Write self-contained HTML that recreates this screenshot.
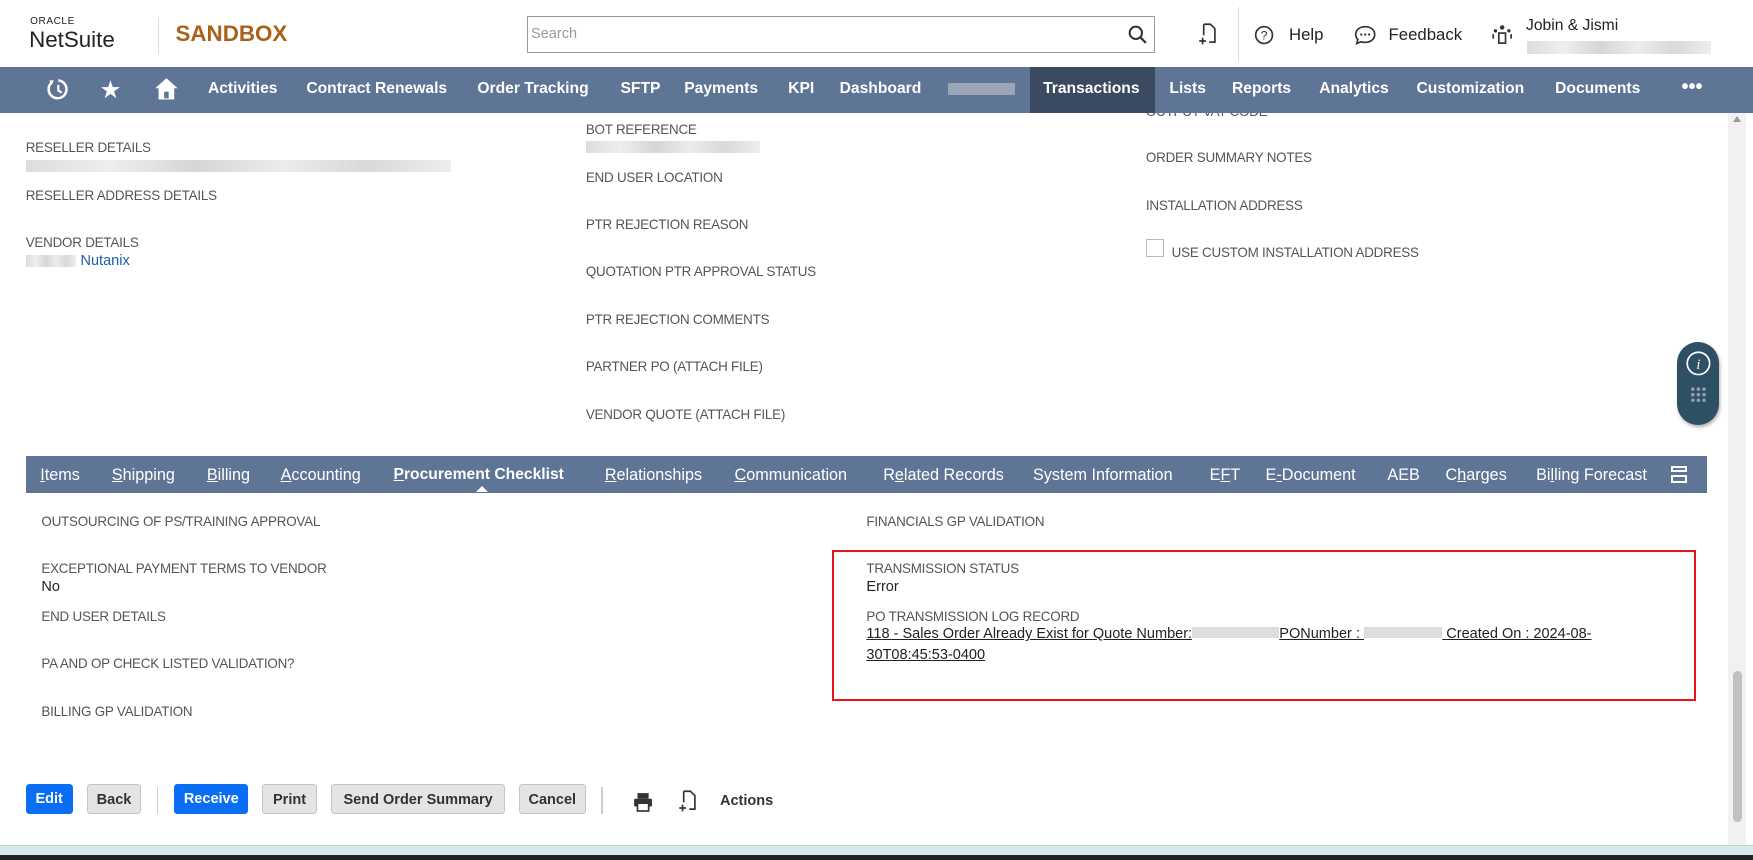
<!DOCTYPE html>
<html><head><meta charset="utf-8"><style>
html{zoom:1.11798}
body{margin:0;width:1568px;height:769px;overflow:hidden;background:#fff;font-family:"Liberation Sans",sans-serif;position:relative}
.a{position:absolute;white-space:nowrap}
.lbl{font-size:12px;color:#555;letter-spacing:-0.2px}
.val{font-size:13px;color:#222}
.nav{font-size:14px;font-weight:bold;color:#fff;top:72px}
.tab{font-size:14.5px;color:#fff;top:417px}
.tab u{text-decoration:underline}
.blur{background:linear-gradient(90deg,#ddd,#eee,#d6d6d6,#ececec,#d9d9d9,#eee);height:11px}
.btn{top:701px;height:27px;line-height:27px;font-size:13px;font-weight:bold;text-align:center;border-radius:3px;box-sizing:border-box}
.g{background:#e4e4e4;border:1px solid #c4c4c4;color:#333}
.b{background:#0a6ef5;color:#fff}
</style></head><body>
<div class="a lbl" style="left:1025px;top:93px">OUTPUT VAT CODE</div>
<!-- header -->
<div class="a" style="left:0;top:0;width:1568px;height:60px;background:#fff"></div>
<div class="a" style="left:27px;top:14px;font-size:9px;letter-spacing:0.5px;color:#222">ORACLE</div>
<div class="a" style="left:26px;top:24px;font-size:20px;color:#222">NetSuite</div>
<div class="a" style="left:141px;top:15px;width:1px;height:33px;background:#ddd"></div>
<div class="a" style="left:157px;top:19px;font-size:20px;font-weight:bold;color:#a9611c">SANDBOX</div>
<div class="a" style="left:471px;top:14px;width:560px;height:32px;border:1px solid #999"></div>
<div class="a" style="left:475px;top:23px;font-size:13px;color:#999">Search</div>
<svg class="a" style="left:1009px;top:22px" width="18" height="18"><circle cx="7" cy="7" r="5.5" fill="none" stroke="#333" stroke-width="1.8"/><path d="M11 11L16 16" stroke="#333" stroke-width="2"/></svg>
<svg class="a" style="left:1071px;top:20px" width="20" height="22"><path d="M6 2H12L16 6V18H11M6 2V12" fill="none" stroke="#333" stroke-width="1.5"/><path d="M5 14V20M2 17H8" stroke="#333" stroke-width="1.5"/></svg>
<div class="a" style="left:1107px;top:6px;width:1px;height:49px;background:#ddd"></div>
<svg class="a" style="left:1122px;top:22px" width="18" height="18"><circle cx="9" cy="9" r="7.5" fill="none" stroke="#333" stroke-width="1.5"/><text x="9" y="13" font-size="11" text-anchor="middle" font-family="Liberation Sans" fill="#333">?</text></svg>
<div class="a" style="left:1153px;top:22px;font-size:15px;color:#222">Help</div>
<svg class="a" style="left:1211px;top:22px" width="20" height="18"><path d="M10 1.5C5 1.5 1.5 4.5 1.5 8.5C1.5 10.5 2.5 12 3.5 13L2.5 16.5L6.5 15C7.5 15.3 8.7 15.5 10 15.5C15 15.5 18.5 12.5 18.5 8.5C18.5 4.5 15 1.5 10 1.5Z" fill="none" stroke="#333" stroke-width="1.5"/><circle cx="6.5" cy="8.5" r="1" fill="#333"/><circle cx="10" cy="8.5" r="1" fill="#333"/><circle cx="13.5" cy="8.5" r="1" fill="#333"/></svg>
<div class="a" style="left:1242px;top:22px;font-size:15px;color:#222">Feedback</div>
<svg class="a" style="left:1334px;top:21px" width="20" height="20"><circle cx="10" cy="4" r="2" fill="#333"/><circle cx="4" cy="7" r="1.5" fill="#333"/><circle cx="16" cy="7" r="1.5" fill="#333"/><rect x="7" y="9" width="6" height="9" fill="none" stroke="#333" stroke-width="1.5"/><path d="M2 10V14M18 10V14" stroke="#333" stroke-width="1.5"/></svg>
<div class="a" style="left:1365px;top:15px;font-size:14px;color:#222">Jobin &amp; Jismi</div>
<div class="a blur" style="left:1366px;top:37px;width:164px"></div>
<!-- nav -->
<div class="a" style="left:0;top:60px;width:1568px;height:41px;background:#5f7596"></div>
<div class="a" style="left:921px;top:60px;width:112px;height:41px;background:#3a4a60"></div>
<svg class="a" style="left:41px;top:69px" width="22" height="22"><path d="M5 5A8 8 0 1 0 11 3" fill="none" stroke="#fff" stroke-width="2.2"/><path d="M3 3L7 3L5 7" fill="#fff"/><path d="M11 7V12L14 14" fill="none" stroke="#fff" stroke-width="2"/></svg>
<div class="a" style="left:89px;top:67px;font-size:22px;color:#fff">★</div>
<svg class="a" style="left:137px;top:68px" width="24" height="22"><path d="M12 2L2 11H5V21H19V11H22Z" fill="#fff"/><rect x="10" y="14" width="4" height="6" fill="#5f7596"/></svg>
<div class="a nav" style="left:186px">Activities</div>
<div class="a nav" style="left:274px">Contract Renewals</div>
<div class="a nav" style="left:427px">Order Tracking</div>
<div class="a nav" style="left:555px">SFTP</div>
<div class="a nav" style="left:612px">Payments</div>
<div class="a nav" style="left:705px">KPI</div>
<div class="a nav" style="left:751px">Dashboard</div>
<div class="a" style="left:848px;top:74px;width:60px;height:11px;background:#9aa6b8"></div>
<div class="a nav" style="left:933px">Transactions</div>
<div class="a nav" style="left:1046px">Lists</div>
<div class="a nav" style="left:1102px">Reports</div>
<div class="a nav" style="left:1180px">Analytics</div>
<div class="a nav" style="left:1267px">Customization</div>
<div class="a nav" style="left:1391px">Documents</div>
<div class="a nav" style="left:1504px;top:68px;font-size:18px">•••</div>
<!-- body fields -->
<div class="a lbl" style="left:23px;top:125px">RESELLER DETAILS</div>
<div class="a blur" style="left:23px;top:143px;width:380px"></div>
<div class="a lbl" style="left:23px;top:168px">RESELLER ADDRESS DETAILS</div>
<div class="a lbl" style="left:23px;top:210px">VENDOR DETAILS</div>
<div class="a blur" style="left:23px;top:228px;width:45px"></div>
<div class="a" style="left:72px;top:226px;font-size:13px;color:#1a5eaa">Nutanix</div>
<div class="a lbl" style="left:524px;top:109px">BOT REFERENCE</div>
<div class="a blur" style="left:524px;top:126px;width:156px"></div>
<div class="a lbl" style="left:524px;top:152px">END USER LOCATION</div>
<div class="a lbl" style="left:524px;top:194px">PTR REJECTION REASON</div>
<div class="a lbl" style="left:524px;top:236px">QUOTATION PTR APPROVAL STATUS</div>
<div class="a lbl" style="left:524px;top:279px">PTR REJECTION COMMENTS</div>
<div class="a lbl" style="left:524px;top:321px">PARTNER PO (ATTACH FILE)</div>
<div class="a lbl" style="left:524px;top:364px">VENDOR QUOTE (ATTACH FILE)</div>
<div class="a lbl" style="left:1025px;top:134px">ORDER SUMMARY NOTES</div>
<div class="a lbl" style="left:1025px;top:177px">INSTALLATION ADDRESS</div>
<div class="a" style="left:1025px;top:214px;width:16px;height:16px;border:1px solid #bbb;box-sizing:border-box"></div>
<div class="a lbl" style="left:1048px;top:219px">USE CUSTOM INSTALLATION ADDRESS</div>
<!-- widget -->
<div class="a" style="left:1500px;top:306px;width:38px;height:74px;border-radius:19px;background:#2e5064;box-shadow:1px 2px 3px rgba(0,0,0,.3)"></div>
<svg class="a" style="left:1507px;top:313px" width="24" height="62"><circle cx="12" cy="12" r="10" fill="none" stroke="#fff" stroke-width="1.5"/><text x="12" y="17" font-size="13" font-style="italic" font-family="Liberation Serif" text-anchor="middle" fill="#fff">i</text><g fill="#8fa0ab"><circle cx="7" cy="35" r="1.6"/><circle cx="12" cy="35" r="1.6"/><circle cx="17" cy="35" r="1.6"/><circle cx="7" cy="40" r="1.6"/><circle cx="12" cy="40" r="1.6"/><circle cx="17" cy="40" r="1.6"/><circle cx="7" cy="45" r="1.6"/><circle cx="12" cy="45" r="1.6"/><circle cx="17" cy="45" r="1.6"/></g></svg>
<!-- subtabs -->
<div class="a" style="left:23px;top:408px;width:1504px;height:33px;background:#5f7596"></div>
<div class="a tab" style="left:36px"><u>I</u>tems</div>
<div class="a tab" style="left:100px"><u>S</u>hipping</div>
<div class="a tab" style="left:185px"><u>B</u>illing</div>
<div class="a tab" style="left:251px"><u>A</u>ccounting</div>
<div class="a tab" style="left:352px;font-weight:bold;font-size:14px"><u>P</u>rocurement Checklist</div>
<div class="a" style="left:426px;top:435px;width:0;height:0;border-left:6px solid transparent;border-right:6px solid transparent;border-bottom:6px solid #fff"></div>
<div class="a tab" style="left:541px"><u>R</u>elationships</div>
<div class="a tab" style="left:657px"><u>C</u>ommunication</div>
<div class="a tab" style="left:790px">R<u>e</u>lated Records</div>
<div class="a tab" style="left:924px">System Information</div>
<div class="a tab" style="left:1082px">E<u>F</u>T</div>
<div class="a tab" style="left:1132px">E<u>-</u>Document</div>
<div class="a tab" style="left:1241px">AEB</div>
<div class="a tab" style="left:1293px">C<u>h</u>arges</div>
<div class="a tab" style="left:1374px">Bi<u>l</u>ling Forecast</div>
<div class="a" style="left:1495px;top:417px;width:14px;height:5px;border:2px solid #fff;box-sizing:border-box"></div>
<div class="a" style="left:1495px;top:425px;width:14px;height:7px;border:2px solid #fff;box-sizing:border-box"></div>
<!-- subtab fields -->
<div class="a lbl" style="left:37px;top:460px">OUTSOURCING OF PS/TRAINING APPROVAL</div>
<div class="a lbl" style="left:37px;top:502px">EXCEPTIONAL PAYMENT TERMS TO VENDOR</div>
<div class="a val" style="left:37px;top:518px">No</div>
<div class="a lbl" style="left:37px;top:545px">END USER DETAILS</div>
<div class="a lbl" style="left:37px;top:587px">PA AND OP CHECK LISTED VALIDATION?</div>
<div class="a lbl" style="left:37px;top:630px">BILLING GP VALIDATION</div>
<div class="a lbl" style="left:775px;top:460px">FINANCIALS GP VALIDATION</div>
<div class="a lbl" style="left:775px;top:502px">TRANSMISSION STATUS</div>
<div class="a val" style="left:775px;top:518px">Error</div>
<div class="a lbl" style="left:775px;top:545px">PO TRANSMISSION LOG RECORD</div>
<div class="a val" style="left:775px;top:560px;text-decoration:underline">118 - Sales Order Already Exist for Quote Number:<span style="display:inline-block;width:78px;height:10px;background:#ddd"></span>PONumber : <span style="display:inline-block;width:70px;height:10px;background:#ddd"></span> Created On : 2024-08-</div>
<div class="a val" style="left:775px;top:579px;text-decoration:underline">30T08:45:53-0400</div>
<div class="a" style="left:744px;top:492px;width:773px;height:135px;border:2px solid #e8141b;box-sizing:border-box"></div>
<!-- buttons -->
<div class="a btn b" style="left:23px;width:42px">Edit</div>
<div class="a btn g" style="left:78px;width:48px">Back</div>
<div class="a" style="left:140px;top:704px;width:1px;height:24px;background:#ccc"></div>
<div class="a btn b" style="left:156px;width:66px">Receive</div>
<div class="a btn g" style="left:234px;width:50px">Print</div>
<div class="a btn g" style="left:296px;width:156px">Send Order Summary</div>
<div class="a btn g" style="left:464px;width:60px">Cancel</div>
<div class="a" style="left:538px;top:704px;width:1px;height:24px;background:#ccc"></div>
<svg class="a" style="left:566px;top:708px" width="18" height="18"><rect x="4" y="1" width="10" height="5" fill="#333"/><rect x="1" y="6" width="16" height="7" rx="1" fill="#333"/><rect x="4" y="10" width="10" height="7" fill="#fff" stroke="#333" stroke-width="1.5"/></svg>
<svg class="a" style="left:606px;top:706px" width="20" height="22"><path d="M6 2H12L16 6V18H11M6 2V12" fill="none" stroke="#333" stroke-width="1.5"/><path d="M5 14V20M2 17H8" stroke="#333" stroke-width="1.5"/></svg>
<div class="a" style="left:644px;top:709px;font-size:13px;font-weight:bold;color:#333">Actions</div>
<!-- scrollbar -->
<div class="a" style="left:1546px;top:101px;width:16px;height:655px;background:#f1f1f1"></div>
<div class="a" style="left:1550px;top:104px;width:0;height:0;border-left:4px solid transparent;border-right:4px solid transparent;border-bottom:6px solid #999"></div>
<div class="a" style="left:1550px;top:600px;width:8px;height:135px;background:#c1c1c1;border-radius:4px"></div>
<!-- bottom -->
<div class="a" style="left:0;top:756px;width:1568px;height:1px;background:#ccc"></div>
<div class="a" style="left:0;top:757px;width:1568px;height:8px;background:#d3ebeb"></div>
<div class="a" style="left:0;top:765px;width:1568px;height:4px;background:#222"></div>
</body></html>
